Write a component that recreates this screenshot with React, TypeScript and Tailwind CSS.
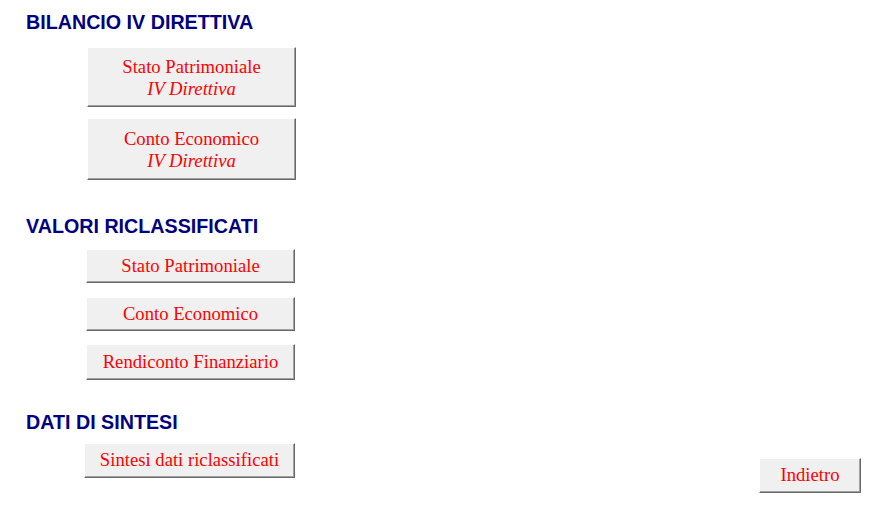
import type { ReactNode } from "react";

// Excel-style form button: light face, white top/left edge, two-tone dark bottom/right edge
function SheetButton({ children, className = "" }: { children: ReactNode; className?: string }) {
  return (
    <button
      className={`flex flex-col items-center justify-center bg-[#f0f0f0] border-t border-l border-white border-r border-b border-r-[#696969] border-b-[#696969] shadow-[inset_-1px_-1px_0_#a0a0a0] text-[#ff0000] text-[18.67px] leading-[22.3px] ${className}`}
      style={{ fontFamily: '"Liberation Serif", "Times New Roman", serif' }}
    >
      {children}
    </button>
  );
}

function SectionTitle({ children, className = "" }: { children: ReactNode; className?: string }) {
  return (
    <h2
      className={`ml-[26px] h-[20px] text-[19.7px] leading-[20px] font-bold text-[#000080] ${className}`}
      style={{ fontFamily: '"Liberation Sans", Arial, sans-serif' }}
    >
      {children}
    </h2>
  );
}

export default function App() {
  return (
    <div className="w-full min-h-[509px] bg-white pt-[12px]">
      <SectionTitle>BILANCIO IV DIRETTIVA</SectionTitle>

      <SheetButton className="ml-[87px] mt-[15px] w-[209px] h-[60px] pt-[2px]">
        <span>Stato Patrimoniale</span>
        <span className="italic">IV Direttiva</span>
      </SheetButton>
      <SheetButton className="ml-[87px] mt-[11px] w-[209px] h-[62px] pt-[2px]">
        <span>Conto Economico</span>
        <span className="italic">IV Direttiva</span>
      </SheetButton>

      <SectionTitle className="mt-[36px]">VALORI RICLASSIFICATI</SectionTitle>

      <SheetButton className="ml-[86px] mt-[13px] w-[209px] h-[34px]">Stato Patrimoniale</SheetButton>
      <SheetButton className="ml-[86px] mt-[14px] w-[209px] h-[34px]">Conto Economico</SheetButton>
      <SheetButton className="ml-[86px] mt-[13px] w-[209px] h-[36px]">Rendiconto Finanziario</SheetButton>

      <div className="flex items-start mt-[32px] pr-[31px]">
        <div>
          <SectionTitle>DATI DI SINTESI</SectionTitle>
          <SheetButton className="ml-[84px] mt-[11px] w-[211px] h-[35px]">Sintesi dati riclassificati</SheetButton>
        </div>
        <SheetButton className="ml-auto mt-[46px] w-[102px] h-[35px]">Indietro</SheetButton>
      </div>
    </div>
  );
}
